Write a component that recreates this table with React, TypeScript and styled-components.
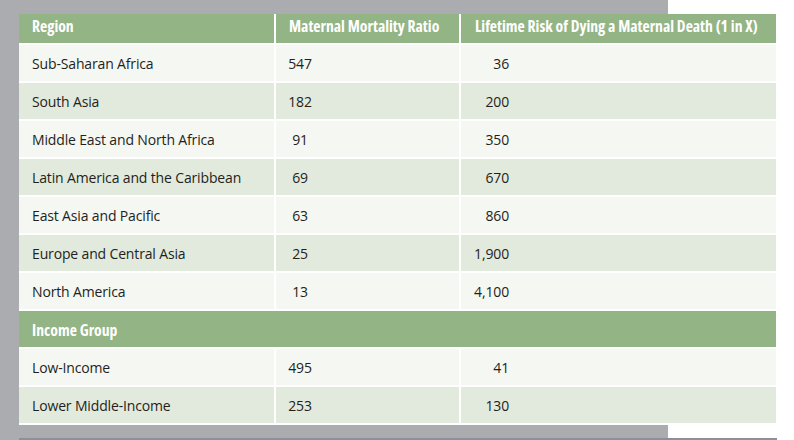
import React from "react";
import styled, { createGlobalStyle } from "styled-components";

const GlobalStyle = createGlobalStyle`
  html, body {
    margin: 0;
    padding: 0;
    background: #ffffff;
  }
`;

const Page = styled.div`
  width: 794px;
  height: 440px;
  overflow: hidden;
  padding-top: 14px;
  box-sizing: border-box;
  background: linear-gradient(to right, #abacb0 668px, #ffffff 668px);
`;

const Table = styled.table`
  margin-left: 19px;
  width: 757px;
  border-collapse: collapse;
  table-layout: fixed;
  font-family: "Open Sans", "Liberation Sans", sans-serif;
  font-size: 14px;
  letter-spacing: -0.15px;
  color: #231f20;
`;

const HeadCell = styled.th<{ $pad?: number }>`
  height: 30px;
  padding: 0 0 5px ${(p) => p.$pad ?? 13}px;
  box-sizing: border-box;
  text-align: left;
  vertical-align: middle;
  white-space: nowrap;
  background: #93b484;
  color: #ffffff;
  font-family: "Open Sans", sans-serif;
  font-stretch: 75%;
  font-weight: 700;
  font-size: 15.7px;
  letter-spacing: 0;
  border-bottom: 2px solid #ffffff;
  border-right: 2px solid #ffffff;

  &:last-child {
    border-right: none;
  }
`;

const Row = styled.tr<{ $alt?: boolean }>`
  background: ${(p) => (p.$alt ? "#e2eadd" : "#f5f7f3")};
`;

const Cell = styled.td<{ $pad?: number }>`
  height: 38px;
  padding: 0 0 0 ${(p) => p.$pad ?? 13}px;
  box-sizing: border-box;
  vertical-align: middle;
  border-bottom: 2px solid #ffffff;
  border-right: 2px solid #ffffff;

  &:last-child {
    border-right: none;
  }
`;

const GroupCell = styled.td`
  height: 38px;
  padding: 1px 0 0 13px;
  box-sizing: border-box;
  background: #93b484;
  color: #ffffff;
  font-family: "Open Sans", sans-serif;
  font-stretch: 75%;
  font-weight: 700;
  font-size: 15.7px;
  letter-spacing: 0;
  border-bottom: 2px solid #ffffff;
`;

const Num = styled.span<{ $align: "center" | "right"; $w: number }>`
  display: inline-block;
  width: ${(p) => p.$w}px;
  text-align: ${(p) => p.$align};
`;

const BottomBar = styled.div`
  margin: 13px 0 0 19px;
  width: 758px;
  height: 4px;
  background: #8e8f98;
`;

type Item = { name: string; ratio: string; risk: string };

const regions: Item[] = [
  { name: "Sub-Saharan Africa", ratio: "547", risk: "36" },
  { name: "South Asia", ratio: "182", risk: "200" },
  { name: "Middle East and North Africa", ratio: "91", risk: "350" },
  { name: "Latin America and the Caribbean", ratio: "69", risk: "670" },
  { name: "East Asia and Pacific", ratio: "63", risk: "860" },
  { name: "Europe and Central Asia", ratio: "25", risk: "1,900" },
  { name: "North America", ratio: "13", risk: "4,100" },
];

const income: Item[] = [
  { name: "Low-Income", ratio: "495", risk: "41" },
  { name: "Lower Middle-Income", ratio: "253", risk: "130" },
];

const DataRow: React.FC<{ item: Item; alt: boolean }> = ({ item, alt }) => (
  <Row $alt={alt}>
    <Cell>{item.name}</Cell>
    <Cell $pad={12}>
      <Num $align="center" $w={24}>
        {item.ratio}
      </Num>
    </Cell>
    <Cell $pad={13}>
      <Num $align="right" $w={35}>
        {item.risk}
      </Num>
    </Cell>
  </Row>
);

const App: React.FC = () => {
  return (
    <Page>
      <GlobalStyle />
      <Table>
        <colgroup>
          <col style={{ width: 256 }} />
          <col style={{ width: 185 }} />
          <col style={{ width: 316 }} />
        </colgroup>
        <thead>
          <tr>
            <HeadCell>Region</HeadCell>
            <HeadCell>Maternal Mortality Ratio</HeadCell>
            <HeadCell $pad={14}>
              Lifetime Risk of Dying a Maternal Death (1 in X)
            </HeadCell>
          </tr>
        </thead>
        <tbody>
          {regions.map((item, i) => (
            <DataRow key={item.name} item={item} alt={i % 2 === 1} />
          ))}
          <tr>
            <GroupCell colSpan={3}>Income Group</GroupCell>
          </tr>
          {income.map((item, i) => (
            <DataRow key={item.name} item={item} alt={i % 2 === 1} />
          ))}
        </tbody>
      </Table>
      <BottomBar />
    </Page>
  );
};

export default App;
